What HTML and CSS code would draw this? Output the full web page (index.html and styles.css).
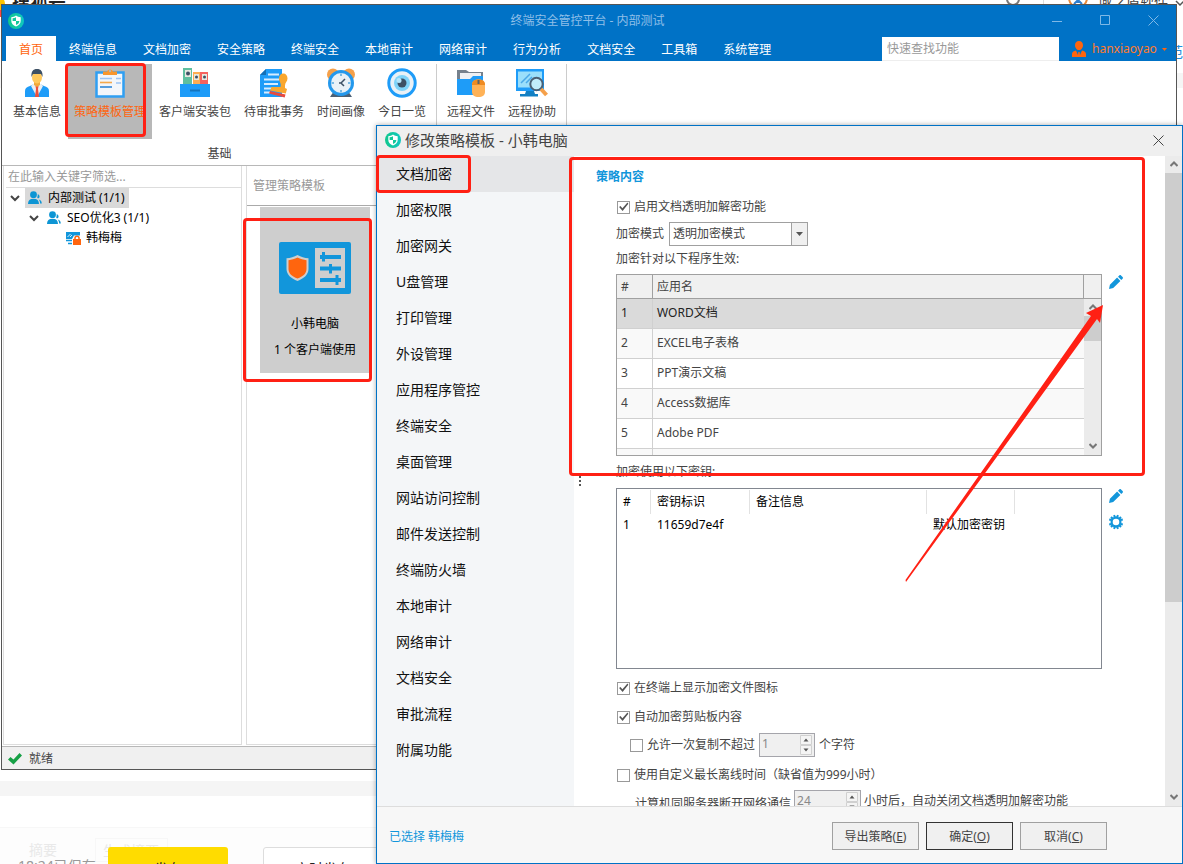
FILE: index.html
```html
<!DOCTYPE html>
<html lang="zh-CN">
<head>
<meta charset="utf-8">
<title>终端安全管控平台</title>
<link rel="stylesheet" href="styles.css">
</head>
<body>
<svg class="defs" aria-hidden="true">
  <defs>
    <linearGradient id="brand" x1="0" y1="0" x2="1" y2="0"><stop offset="0" stop-color="#12c78d"/><stop offset="1" stop-color="#10c8c0"/></linearGradient>
    <symbol id="logo" viewBox="0 0 16 16">
      <circle cx="8" cy="8" r="8" fill="url(#brand)"/>
      <path d="M8 2.600c1.400 1 3 1.500 4.700 1.600v3.600c0 2.700-1.800 4.700-4.700 5.800-2.900-1.100-4.700-3.100-4.700-5.800V4.200C5 4.100 6.600 3.600 8 2.600z" fill="#fff"/>
      <path d="M8 4.200v3.800H4.600V5.200C5.900 5.100 7 4.800 8 4.200zM8 8h3.400c-.1 1.900-1.300 3.200-3.400 4.100z" fill="#12c79a"/>
    </symbol>
    <symbol id="people" viewBox="0 0 14 14">
      <circle cx="5.500" cy="3.700" r="3.400" fill="#0d95d4"/>
      <path d="M0 13c0-3.500 1.800-5.200 5.500-5.200S11 9.500 11 13z" fill="#0d95d4"/>
      <path d="M9.600 3.200a2.200 2.200 0 0 1 .4 4.300l-.9-1.200c.6-.9.8-2 .5-3.100zM10.600 8.600c2 .4 3.200 1.700 3.200 3.800h-1.700c0-1.500-.5-2.800-1.500-3.800z" fill="#0d95d4"/>
    </symbol>
    <symbol id="pencil" viewBox="0 0 14 14">
      <path d="M0 14l.9-4.300 7.200-7.100 3.300 3.300-7.200 7.100zM9 1.700l1.300-1.300c.5-.5 1.200-.5 1.700 0L13.600 2c.5.500.5 1.200 0 1.700L12.300 5z" fill="#1296db"/>
    </symbol>
    <symbol id="up" viewBox="0 0 8 6"><path d="M.5 5L4 1.500 7.500 5" fill="none" stroke="#777" stroke-width="2"/></symbol>
    <symbol id="down" viewBox="0 0 8 6"><path d="M.5 1L4 4.500 7.500 1" fill="none" stroke="#777" stroke-width="2"/></symbol>
    <symbol id="spin" viewBox="0 0 12 20">
      <path d="M.5.500h11v9H.5zM.5 10.500h11v9H.5z" fill="#f4f4f4" stroke="#d0d0d0"/>
      <path d="M3.500 6.500L6 3.500l2.500 3zM3.500 13.500l2.500 3 2.500-3z" fill="#555"/>
    </symbol>
  </defs>
</svg>

<div class="backdrop">
  <header class="site-head">
    <svg class="site-mark" viewBox="0 0 12 28"><circle cx="-4" cy="16" r="9" fill="#ffc400"/><path d="M0 22h3v7H0z" fill="#f44"/></svg>
    <strong class="site-name">搜狐号</strong>
    <svg class="site-search" viewBox="0 0 16 28"><circle cx="8" cy="11" r="6" fill="none" stroke="#777" stroke-width="2"/></svg>
    <span class="site-rule"></span>
    <svg class="site-avatar" viewBox="0 0 20 28"><circle cx="10" cy="10" r="9" fill="#fff" stroke="#e88a3a" stroke-width="2"/><path d="M5 10h10M10 6v9M6 16l4-4 4 4" stroke="#2f7fd0" stroke-width="2" fill="none"/></svg>
    <span class="site-user">域之盾软件</span>
    <svg class="site-caret" viewBox="0 0 8 28"><path d="M1 13l4 4 4-4" fill="none" stroke="#555" stroke-width="1.500"/></svg>
  </header>
  <div class="site-link"><a href="#">范</a></div>
  <div class="site-band"></div>
  <div class="site-space"></div>
  <div class="site-band"></div>
  <div class="site-gap"></div>
  <footer class="site-foot">
    <div class="ghosts"><span>摘要</span><span class="ghost-box">生成摘要</span></div>
    <div class="publish">
      <span class="saved">18:24已保存</span>
      <button class="pub pub-main">发布</button>
      <button class="pub">定时发布</button>
    </div>
  </footer>
</div>

<main class="window">
  <div class="titlebar">
    <svg class="logo" viewBox="0 0 16 16"><use href="#logo"/></svg>
    <h1 class="title">终端安全管控平台 - 内部测试</h1>
    <div class="winctl">
      <button aria-label="最小化"><svg viewBox="0 0 11 11"><path d="M0 6.500h10"/></svg></button>
      <button aria-label="最大化"><svg viewBox="0 0 11 11"><path d="M.5.500h9v9H.5z"/></svg></button>
      <button aria-label="关闭"><svg viewBox="0 0 11 11"><path d="M.5.500l10 10M10.500.500l-10 10"/></svg></button>
    </div>
  </div>
  <div class="menubar">
    <nav class="tabs">
      <a class="tab tab-on" href="#">首页</a><a class="tab" href="#">终端信息</a><a class="tab" href="#">文档加密</a><a class="tab" href="#">安全策略</a><a class="tab" href="#">终端安全</a><a class="tab" href="#">本地审计</a><a class="tab" href="#">网络审计</a><a class="tab" href="#">行为分析</a><a class="tab" href="#">文档安全</a><a class="tab" href="#">工具箱</a><a class="tab" href="#">系统管理</a>
    </nav>
    <input class="find" type="text" placeholder="快速查找功能" aria-label="快速查找功能">
    <button class="account">
      <svg class="account-icon" viewBox="0 0 14 16"><path d="M7 0c2.500 0 4 1.700 4 4.200S9.300 9 7 9 3 6.700 3 4.200 4.500 0 7 0zM0 16v-3c0-2 1.500-3 4-3.500L6 14l.3-3h1.400l.3 3 2-4.500c2.500.5 4 1.500 4 3.500v3z" fill="#ff650e"/></svg>
      <span>hanxiaoyao</span>
      <svg class="account-caret" viewBox="0 0 6 3"><path d="M0 0h5L2.500 3z" fill="#ff650e"/></svg>
    </button>
  </div>
  <div class="ribbon">
    <section class="group">
      <div class="tools">
        <button class="tool">
          <svg viewBox="0 0 30 30"><path d="M3 29v-6c0-3 2-4 5-5l4-2h6l4 2c3 1 5 2 5 5v6z" fill="#1e9cf8"/><path d="M11 16h8l2 2-6 11-6-11z" fill="#e9eef2"/><path d="M13.500 18h3l-.5 3 1 8h-4l1-8z" fill="#f0503c"/><path d="M12 12h6v5l-3 2-3-2z" fill="#f2a93a"/><ellipse cx="15" cy="9.500" rx="5" ry="6" fill="#ffc95c"/><path d="M9.500 9C9 3.500 11 1 15 1s6 2.500 5.500 8L19 6h-8z" fill="#3d5064"/></svg>
          <span>基本信息</span>
        </button>
        <button class="tool tool-on">
          <svg viewBox="0 0 30 30"><path d="M1.500 4.500h27v24h-27z" fill="#f3f6fa" stroke="#2f9ff2" stroke-width="2.500"/><path d="M8 7V3.500h4A3.200 3.200 0 0 1 18 3.500h4V7z" fill="#f9962c"/><circle cx="15" cy="3" r="1.200" fill="#b5b5b5"/><path d="M5 10.500h12M21 10.500h5M21 15h5" stroke="#9bc4f5" stroke-width="1.600"/><path d="M5 14.500h12" stroke="#f5a94c" stroke-width="1.600"/><path d="M5 19h12" stroke="#2f88d8" stroke-width="1.600"/></svg>
          <span>策略模板管理</span>
        </button>
        <button class="tool">
          <svg viewBox="0 0 30 30"><path d="M3 0h9v17H3z" fill="#5fbf9f"/><path d="M13 4h7v13h-7z" fill="#ffad52"/><path d="M20 4h8v13h-8z" fill="#f5625f"/><path d="M5 2h6v7H5zM14 6h5v6h-5zM22 6h5v6h-5z" fill="#e8e8e0"/><circle cx="8" cy="5.500" r="2" fill="#3d5064"/><circle cx="16.500" cy="9" r="1.500" fill="#3d5064"/><circle cx="24.500" cy="9" r="1.500" fill="#3d5064"/><path d="M0 16h30v13H0z" fill="#1e9cf8"/><path d="M10 21.500h10v2H10z" fill="#1474bd"/></svg>
          <span>客户端安装包</span>
        </button>
        <button class="tool">
          <svg viewBox="0 0 30 30"><path d="M7 1h16v28H1V7z" fill="#1e9cf8"/><path d="M1 7l6-6v6z" fill="#146fb5"/><path d="M9 6.500h11M5 11.500h15M5 16h14M5 20.500h11M5 24.500h6" stroke="#d5ecff" stroke-width="1.800"/><path d="M20 10.500c0-3 1.700-5 4.300-5s4.200 2 4.200 5c0 3-2.500 4-2.500 7v2.500l2 1-1.200 4.500L11 22.500l1.500-3.500h9c1.200-3.500-1.500-5.500-1.500-8.500z" fill="#f9a72e"/><path d="M11 23l15.500 3.500-.8 3L10 25.500z" fill="#e84a3e"/></svg>
          <span>待审批事务</span>
        </button>
        <button class="tool">
          <svg viewBox="0 0 30 30"><circle cx="7" cy="6.500" r="6" fill="#f5a04a"/><circle cx="23" cy="6.500" r="6" fill="#f5a04a"/><path d="M4 29l4-6h14l4 6z" fill="#4b6075"/><circle cx="15" cy="15" r="11.500" fill="#e9f1f7" stroke="#2498ec" stroke-width="3"/><path d="M15 15l4-4M15 15l3 3M13 15h2" stroke="#3d5064" stroke-width="1.500"/><path d="M15 5.500v2.500M15 22v2.500M5.500 15H8M22 15h2.500" stroke="#56a8e0" stroke-width="1.500"/></svg>
          <span>时间画像</span>
        </button>
        <button class="tool">
          <svg viewBox="0 0 30 30"><circle cx="15" cy="15" r="13.200" fill="#e9f1f7" stroke="#1e9cf8" stroke-width="3"/><circle cx="15" cy="15" r="8" fill="#7fd3f9"/><circle cx="15" cy="15" r="4.500" fill="#3d5064"/><circle cx="12" cy="12.500" r="2.500" fill="#b6e6fb"/></svg>
          <span>今日一览</span>
        </button>
      </div>
      <h2 class="group-name">基础</h2>
    </section>
    <section class="group">
      <div class="tools">
        <button class="tool">
          <svg viewBox="0 0 30 30"><path d="M1 2h9l3 2h14v12H1z" fill="#76818c"/><path d="M4 5h21v8H4z" fill="#eef0f2"/><path d="M1 11h13l3-3h10v19H1z" fill="#1e9cf8"/><path d="M16 17c0-4 2.500-5.500 6.500-5.500S29 13 29 17v7c0 3-2.500 5-6.500 5S16 27 16 24z" fill="#ffb257"/><path d="M16 17c0-4 2.500-5.500 6.500-5.500S29 13 29 17z" fill="#ef8b22"/><path d="M22.500 12v4" stroke="#59636d" stroke-width="2"/></svg>
          <span>远程文件</span>
        </button>
        <button class="tool">
          <svg viewBox="0 0 30 30"><path d="M-1 1h28v22H-1z" fill="#1e9cf8"/><path d="M1 3.500h24v16H1z" fill="#9adffb"/><path d="M4 15l9-9M9 15l6-6" stroke="#4aa9e8" stroke-width="1.500"/><path d="M9 23h8l1 3h3v2.500H3V26h5z" fill="#1280c4"/><circle cx="19.500" cy="16" r="6.200" fill="#c2ecfb" stroke="#4b6075" stroke-width="2"/><path d="M24 21l5.500 6" stroke="#f5a04a" stroke-width="4"/></svg>
          <span>远程协助</span>
        </button>
      </div>
    </section>
  </div>
  <div class="workspace">
    <section class="pane tree">
      <input class="filter" type="text" placeholder="在此输入关键字筛选..." aria-label="在此输入关键字筛选">
      <ul class="nodes">
        <li class="node">
          <svg class="chev" viewBox="0 0 10 6"><path d="M1 1l4 4 4-4"/></svg>
          <span class="node-body node-on"><svg class="node-icon" viewBox="0 0 14 14"><use href="#people"/></svg>内部测试 (1/1)</span>
        </li>
        <li class="node node-2">
          <svg class="chev" viewBox="0 0 10 6"><path d="M1 1l4 4 4-4"/></svg>
          <span class="node-body"><svg class="node-icon" viewBox="0 0 14 14"><use href="#people"/></svg>SEO优化3 (1/1)</span>
        </li>
        <li class="node node-3">
          <span class="node-body"><svg class="node-icon" viewBox="0 0 14 14"><path d="M0 1h14v3.500H8L6 8H0z" fill="#1296db"/><path d="M1.500 6l3-3M4 6l2-2" stroke="#d9f0fb"/><path d="M0 9.500h6M2 12.500h4" stroke="#1296db" stroke-width="1.500"/><path d="M7 8h8v6H7z" fill="#ff650e"/><path d="M9 8.500V7c0-2.400 4-2.400 4 0v1.500" fill="none" stroke="#ff650e" stroke-width="1.500"/></svg>韩梅梅</span>
        </li>
      </ul>
    </section>
    <section class="pane templates">
      <h2 class="pane-title">管理策略模板</h2>
      <button class="tile">
        <svg class="tile-icon" viewBox="0 0 72 52"><rect width="72" height="52" rx="2" fill="#1296db"/><path d="M36 6h30v40H36z" fill="#cecece"/><path d="M18.500 13c3.500 2 7 3 11 3.300V27c0 5.500-4.500 9.500-11 12-6.500-2.500-11-6.500-11-12V16.300c4-.3 7.500-1.300 11-3.300z" fill="#cecece"/><path d="M18.500 15.500c3 1.500 6 2.400 9 2.700V27c0 4.500-3.500 7.500-9 9.500-5.500-2-9-5-9-9.500v-8.800c3-.3 6-1.200 9-2.700z" fill="#ff650e"/><path d="M41 15h21M41 26.500h21M41 38h21" stroke="#1296db" stroke-width="4"/><path d="M44.500 10v9.500M51.500 22v9.500M58 33v10" stroke="#1296db" stroke-width="3"/></svg>
        <span>小韩电脑</span>
        <span>1 个客户端使用</span>
      </button>
    </section>
  </div>
  <div class="status">
    <svg class="ok" viewBox="0 0 14 12"><path d="M0 6.500L2.500 4 5.500 6.500 11.500 0 14 2.500 5.500 11.500z" fill="#16a045"/></svg>
    <span>就绪</span>
  </div>
  <div class="mark mark-tool"></div>
  <div class="mark mark-tile"></div>
</main>

<div class="dialog" role="dialog" aria-labelledby="dialog-title">
  <div class="dialog-head">
    <svg class="logo" viewBox="0 0 16 16"><use href="#logo"/></svg>
    <h2 class="dialog-title" id="dialog-title">修改策略模板 - 小韩电脑</h2>
    <button class="dialog-close" aria-label="关闭"><svg viewBox="0 0 11 11"><path d="M.5.500l10 10M10.500.500l-10 10"/></svg></button>
  </div>
  <div class="dialog-body">
    <nav class="sections">
      <a class="section section-on" href="#">文档加密</a>
      <a class="section" href="#">加密权限</a>
      <a class="section" href="#">加密网关</a>
      <a class="section" href="#">U盘管理</a>
      <a class="section" href="#">打印管理</a>
      <a class="section" href="#">外设管理</a>
      <a class="section" href="#">应用程序管控</a>
      <a class="section" href="#">终端安全</a>
      <a class="section" href="#">桌面管理</a>
      <a class="section" href="#">网站访问控制</a>
      <a class="section" href="#">邮件发送控制</a>
      <a class="section" href="#">终端防火墙</a>
      <a class="section" href="#">本地审计</a>
      <a class="section" href="#">网络审计</a>
      <a class="section" href="#">文档安全</a>
      <a class="section" href="#">审批流程</a>
      <a class="section" href="#">附属功能</a>
    </nav>
    <div class="splitter"><svg viewBox="0 0 2 10"><path d="M0 0h2v2H0zM0 4h2v2H0zM0 8h2v2H0z" fill="#555"/></svg></div>
    <form class="form">
      <h3 class="form-title">策略内容</h3>
      <div class="fields">
        <label class="check check-main"><input type="checkbox" checked>启用文档透明加解密功能</label>
        <div class="mode">
          <label for="mode">加密模式</label>
          <span class="combo">
            <select id="mode"><option>透明加密模式</option></select>
            <span class="combo-arrow"><svg viewBox="0 0 7 4"><path d="M0 0h7L3.500 4z" fill="#555"/></svg></span>
          </span>
        </div>
        <p class="caption">加密针对以下程序生效:</p>
        <div class="listing">
          <div class="apps">
            <table class="grid">
              <thead><tr><th class="num">#</th><th>应用名</th><th class="bar"></th></tr></thead>
              <tbody>
                <tr class="row-on"><td>1</td><td colspan="2">WORD文档</td></tr>
                <tr><td>2</td><td colspan="2">EXCEL电子表格</td></tr>
                <tr><td>3</td><td colspan="2">PPT演示文稿</td></tr>
                <tr><td>4</td><td colspan="2">Access数据库</td></tr>
                <tr><td>5</td><td colspan="2">Adobe PDF</td></tr>
                <tr><td></td><td colspan="2"></td></tr>
              </tbody>
            </table>
            <div class="scroll scroll-list"><svg viewBox="0 0 8 6"><use href="#up"/></svg><span class="thumb"></span><svg viewBox="0 0 8 6"><use href="#down"/></svg></div>
          </div>
          <div class="actions"><button type="button" aria-label="编辑程序"><svg viewBox="0 0 14 14"><use href="#pencil"/></svg></button></div>
        </div>
        <p class="caption caption-keys">加密使用以下密钥:</p>
        <div class="listing">
          <div class="keys">
            <table class="keytable">
              <thead><tr><th class="k1">#</th><th class="k2">密钥标识</th><th class="k3">备注信息</th><th class="k4"></th><th></th></tr></thead>
              <tbody><tr><td>1</td><td>11659d7e4f</td><td></td><td>默认加密密钥</td><td></td></tr></tbody>
            </table>
          </div>
          <div class="actions">
            <button type="button" aria-label="编辑密钥"><svg viewBox="0 0 14 14"><use href="#pencil"/></svg></button>
            <button type="button" aria-label="密钥设置"><svg viewBox="0 0 14 14"><circle cx="7" cy="7" r="4.400" fill="none" stroke="#1296db" stroke-width="2.200"/><path d="M5 .2L6 2.500M9 .2L8 2.500M5 13.800l1-2.300M9 13.800L8 11.500M.2 4.500L2.500 5M.2 9.500L2.500 9M13.800 4.500L11.500 5M13.800 9.500L11.500 9M2 2l1.500 1.500M12 2l-1.500 1.500M2 12l1.500-1.500M12 12l-1.500-1.500" stroke="#1296db" stroke-width="2"/></svg></button>
          </div>
        </div>
        <label class="check check-opt"><input type="checkbox" checked>在终端上显示加密文件图标</label>
        <label class="check check-opt"><input type="checkbox" checked>自动加密剪贴板内容</label>
        <div class="limit">
          <label class="check"><input type="checkbox">允许一次复制不超过</label>
          <span class="spinner spinner-copy"><input type="number" value="1" aria-label="字符数"><svg viewBox="0 0 12 20"><use href="#spin"/></svg></span>
          <span>个字符</span>
        </div>
        <label class="check check-off"><input type="checkbox">使用自定义最长离线时间（缺省值为999小时）</label>
        <div class="offline">
          <label class="offline-label" for="hours">计算机同服务器断开网络通信</label>
          <span class="spinner spinner-hours"><input id="hours" type="number" value="24"><svg viewBox="0 0 12 20"><use href="#spin"/></svg></span>
          <span class="offline-tail">小时后，自动关闭文档透明加解密功能</span>
        </div>
      </div>
    </form>
    <div class="scroll scroll-form"><svg viewBox="0 0 8 6"><use href="#up"/></svg><span class="thumb"></span><svg viewBox="0 0 8 6"><use href="#down"/></svg></div>
  </div>
  <div class="dialog-foot">
    <span class="chosen">已选择 韩梅梅</span>
    <div class="buttons">
      <button class="btn">导出策略(<u>E</u>)</button>
      <button class="btn btn-default">确定(<u>O</u>)</button>
      <button class="btn">取消(<u>C</u>)</button>
    </div>
  </div>
  <div class="mark mark-section"></div>
  <div class="mark mark-form"></div>
  <svg class="arrow" viewBox="0 0 205 285"><path d="M6 282L5.500 280 191 16l-5-3 17-8-3 18-3-4z" fill="#ff2014"/></svg>
</div>
</body>
</html>
```

FILE: styles.css
```css
* { box-sizing: border-box; }

body {
  position: relative;
  margin: 0;
  height: 100vh;
  overflow: hidden;
  background: #fff;
  color: #444;
  font: 12px/20px "Noto Sans", "Noto Sans CJK SC", sans-serif;
}

h1, h2, h3, p, ul { margin: 0; padding: 0; font-size: 12px; font-weight: 400; }
ul { list-style: none; }
a { color: inherit; text-decoration: none; }
button, input, select { margin: 0; padding: 0; border: 0; border-radius: 0; background: none; color: inherit; font: inherit; }
svg { display: block; flex: none; overflow: visible; }
.defs { position: absolute; width: 0; height: 0; }
.logo { width: 16px; height: 16px; }

/* Page behind the windows */
.backdrop { display: flex; flex-direction: column; height: 100vh; overflow: hidden; }
.site-head { display: flex; flex: none; align-items: center; height: 28px; margin-top: -12px; }
.site-mark { width: 12px; height: 28px; }
.site-name { color: #222; font-size: 18px; line-height: 28px; font-weight: 700; }
.site-search { width: 16px; height: 28px; margin-left: auto; }
.site-rule { width: 1px; height: 28px; margin: 0 24px 0 22px; background: #ddd; }
.site-avatar { width: 20px; height: 28px; }
.site-user { margin-left: 10px; font-size: 14px; }
.site-caret { width: 8px; height: 28px; margin-left: 7px; }
.site-link { height: 57px; padding-top: 26px; flex: none; color: #1e8de0; font-size: 14px; text-align: right; }
.site-band { height: 15px; flex: none; background: #f5f5f5; }
.site-space { flex: 1; }
.site-gap { height: 31px; flex: none; }
.site-foot { height: 37px; flex: none; overflow: hidden; border-top: 1px solid #f7f7f7; background: #fdfdfd; }
.ghosts { display: flex; gap: 24px; height: 19px; padding: 10px 0 0 29px; color: #e9e9e9; font-size: 14px; line-height: 24px; }
.ghost-box { height: 24px; padding: 0 8px 0 7px; margin-left: 14px; border: 1px solid #f7f7f7; }
.publish { display: flex; align-items: flex-start; }
.saved { width: 108px; padding: 9px 0 0 18px; color: #999; font-size: 14px; white-space: nowrap; }
.pub { width: 120px; height: 40px; margin-right: 35px; padding-top: 4px; border: 1px solid #ddd; border-radius: 3px; background: #fff; color: #222; font-size: 14px; }
.pub-main { border: 0; background: #ffdc00; }

/* Main window */
.window {
  position: absolute;
  inset: 4px 6px 94px 1px;
  display: flex;
  flex-direction: column;
  border: 1px solid #555;
  background: #fff;
}
.titlebar { display: flex; align-items: center; height: 31px; flex: none; padding: 0 17px 0 6px; background: #0072c6; color: #8fbfe8; }
.title { flex: 1; padding-left: 99px; text-align: center; }
.winctl { display: flex; gap: 37px; }
.winctl button { height: 11px; }
.winctl svg { width: 11px; height: 11px; fill: none; stroke: #7fb8e6; }
.menubar { display: flex; align-items: flex-end; height: 25px; flex: none; padding-left: 4px; background: #0072c6; color: #fff; }
.tabs { display: flex; flex: 1; }
.tab { padding: 4px 13px 1px; line-height: 20px; }
.tab-on { background: #fff; color: #ff650e; }
.find { width: 177px; height: 24px; padding: 0 5px; border-bottom: 1px solid #eee; background: #fff; color: #444; }
.find::placeholder, .filter::placeholder { color: #999; opacity: 1; }
.account { display: flex; align-items: center; gap: 6px; height: 24px; padding: 0 8px 0 13px; color: #ff7a2a; }
.account span { width: 64px; white-space: nowrap; }
.account-icon { width: 14px; height: 16px; }
.account-caret { width: 6px; height: 3px; }

.ribbon { display: flex; flex: none; height: 105px; padding: 3px 0 4px; border-bottom: 1px solid #b8b8b8; }
.group { display: flex; flex-direction: column; justify-content: space-between; padding: 0 4px; border-right: 1px solid #ccc; }
.group:first-child { padding-left: 5px; }
.tools { display: flex; gap: 1px; }
.tool { display: flex; flex-direction: column; align-items: center; gap: 4px; height: 75px; padding: 4px 6px 0; }
.tool svg { width: 30px; height: 30px; }
.tool-on { background: #b8b8b8; color: #ff650e; }
.group-name { line-height: 14px; text-align: center; }

.workspace { display: flex; flex: 1; gap: 4px; padding: 0 0 1px 1px; min-height: 0; color: #000; }
.pane { border: 1px solid #ddd; border-top: 0; }
.tree { width: 239px; padding-left: 2px; }
.filter { display: block; width: 100%; height: 22px; padding: 0 2px; border-bottom: 1px solid #ddd; }
.node { display: flex; align-items: center; height: 20px; padding-left: 4px; }
.node-2 { padding-left: 23px; }
.node-3 { padding-left: 57px; }
.chev { width: 10px; height: 6px; margin-right: 5px; fill: none; stroke: #444; stroke-width: 2; }
.node-body { display: flex; align-items: center; gap: 6px; height: 20px; padding: 0 4px 0 3px; white-space: nowrap; }
.node-on { background: #d9d9d9; }
.node-icon { width: 14px; height: 14px; }
.templates { flex: 1; }
.pane-title { height: 40px; padding: 10px 0 0 6px; border-bottom: 1px solid #aaa; color: #999; }
.tile { display: flex; flex-direction: column; align-items: center; gap: 6px; width: 110px; height: 166px; margin: 1px 0 0 13px; padding-top: 35px; background: #cecece; }
.tile-icon { width: 72px; height: 52px; margin-bottom: 14px; }
.status { display: flex; align-items: center; gap: 7px; height: 23px; flex: none; padding: 1px 0 0 6px; border-top: 1px solid #b8b8b8; background: #f0f0f0; }
.ok { width: 14px; height: 12px; }

/* Red call-outs laid over the windows */
.mark { position: absolute; border: 3px solid #ff2014; border-radius: 4px; pointer-events: none; }
.mark-tool { left: 63px; top: 58px; width: 81px; height: 74px; }
.mark-tile { left: 241px; top: 213px; width: 129px; height: 164px; }
.mark-section { left: -1px; top: 29px; width: 95px; height: 38px; }
.mark-form { left: 192px; right: 37px; top: 31px; height: 319px; }
.arrow { position: absolute; right: 77px; top: 174px; width: 205px; height: 285px; pointer-events: none; }

/* Policy dialog */
.dialog {
  position: absolute;
  inset: 125px 0 0 376px;
  display: flex;
  flex-direction: column;
  border: 1px solid #0072c6;
  background: #fff;
  box-shadow: 0 0 5px rgba(0, 0, 0, 0.35);
}
.dialog-head { display: flex; align-items: center; gap: 4px; height: 30px; flex: none; padding: 0 18px 2px 8px; background: #efefef; }
.dialog-title { flex: 1; font-size: 15px; }
.dialog-close svg { width: 11px; height: 11px; fill: none; stroke: #444; }
.dialog-body { display: flex; flex: 1; min-height: 0; }
.sections { width: 197px; flex: none; background: #f4f6f8; color: #111; font-size: 14px; }
.section { display: block; height: 36px; padding-left: 19px; line-height: 36px; }
.section-on { background: #e5e6e8; }
.splitter { display: flex; align-items: center; width: 22px; flex: none; padding-left: 5px; }
.splitter svg { width: 2px; height: 10px; }
.form { flex: 1; min-width: 0; padding: 11px 42px 0 0; overflow: hidden; }
.form-title { color: #1296db; font-weight: 700; }
.fields { padding-left: 20px; }
.check { display: flex; align-items: center; gap: 4px; padding-left: 1px; }
.check-main { margin-top: 10px; }
.check input { position: relative; width: 13px; height: 13px; flex: none; appearance: none; border: 1px solid #999; background: #fff; }
.check input:checked::before { content: ""; display: block; width: 11px; height: 11px; background: #555; clip-path: polygon(10% 50%, 22% 40%, 40% 62%, 86% 10%, 94% 20%, 42% 86%); }
.mode { display: flex; align-items: center; gap: 5px; margin-top: 5px; }
.combo { position: relative; width: 139px; height: 24px; }
.combo select { width: 100%; height: 24px; padding: 0 20px 0 3px; appearance: none; border: 1px solid #a0a0a0; background: #fff; }
.combo-arrow { position: absolute; inset: 1px 1px 1px auto; display: grid; place-items: center; width: 16px; border-left: 1px solid #a0a0a0; background: #f0f0f0; pointer-events: none; }
.combo-arrow svg { width: 7px; height: 4px; }
.caption { margin: 3px 0 5px; }
.caption-keys { margin: 6px 0; }
.listing { display: flex; gap: 7px; }
.actions { display: flex; flex-direction: column; gap: 12px; padding-top: 1px; }
.actions svg { width: 14px; height: 14px; }
.apps { position: relative; flex: 1; height: 182px; overflow: hidden; border: 1px solid #a0a0a0; }
.grid { width: 100%; border-spacing: 0; table-layout: fixed; text-align: left; }
.grid th { height: 24px; padding: 0 4px; border-right: 1px solid #a0a0a0; border-bottom: 1px solid #a0a0a0; background: #f0f0f0; font-weight: 400; }
.grid th:last-child { border-right: 0; }
.grid .num { width: 36px; }
.grid .bar { width: 17px; padding: 0; }
.grid td { height: 30px; padding: 0 4px 2px; border-bottom: 1px solid #d0d0d0; }
.grid td:first-child { border-right: 1px solid #d0d0d0; }
.grid tr:nth-child(even) td { background: #f9f9f9; }
.grid .row-on td { background: #dadada; color: #222; }
.scroll { display: flex; flex-direction: column; align-items: center; width: 17px; background: #ebebeb; }
.scroll svg { width: 8px; height: 6px; margin: 5px 0 6px; }
.scroll svg:last-child { margin-top: auto; }
.thumb { width: 100%; background: #cdcdcd; }
.scroll-list { position: absolute; top: 24px; right: 0; bottom: 0; }
.scroll-list .thumb { height: 25px; }
.scroll-form { flex: none; }
.scroll-form .thumb { height: 66%; }
.keys { flex: 1; height: 181px; padding-top: 1px; border: 1px solid #828790; color: #000; }
.keytable { width: 100%; border-spacing: 0; table-layout: fixed; text-align: left; }
.keytable th { height: 24px; padding: 0 6px; border-right: 1px solid #e2e2e2; font-weight: 400; }
.keytable th:last-child { border-right: 0; }
.keytable td { height: 22px; padding: 0 6px; white-space: nowrap; }
.keytable .k1 { width: 34px; }
.keytable .k2 { width: 99px; }
.keytable .k3 { width: 177px; }
.keytable .k4 { width: 88px; }
.check-opt { margin-top: 9px; }
.limit { display: flex; align-items: center; gap: 4px; margin-top: 6px; padding-left: 13px; }
.check-off { margin-top: 8px; }
.spinner { display: flex; height: 24px; padding: 1px; border: 1px solid #a5a5ab; background: #f0f0f0; color: #888; }
.spinner input { flex: 1; width: 0; height: 18px; padding-left: 1px; appearance: textfield; }
.spinner input::-webkit-inner-spin-button { appearance: none; }
.spinner svg { width: 14px; height: 20px; }
.spinner-copy { width: 56px; }
.spinner-hours { width: 67px; }
.offline { display: flex; align-items: flex-start; gap: 3px; margin-top: 5px; padding-left: 19px; white-space: nowrap; }
.offline-label { padding-top: 4px; }
.offline-tail { padding-top: 1px; }
.dialog-foot { display: flex; justify-content: space-between; align-items: center; height: 57px; flex: none; padding: 2px 75px 0 12px; border-top: 1px solid #ddd; background: #f7f7f7; }
.chosen { padding-top: 2px; color: #1296db; }
.buttons { display: flex; gap: 7px; }
.btn { min-width: 87px; height: 28px; padding: 1px 11px 0; border: 1px solid #a0a0a0; background: #f0f0f0; }
.btn-default { border-color: #333; }
```
